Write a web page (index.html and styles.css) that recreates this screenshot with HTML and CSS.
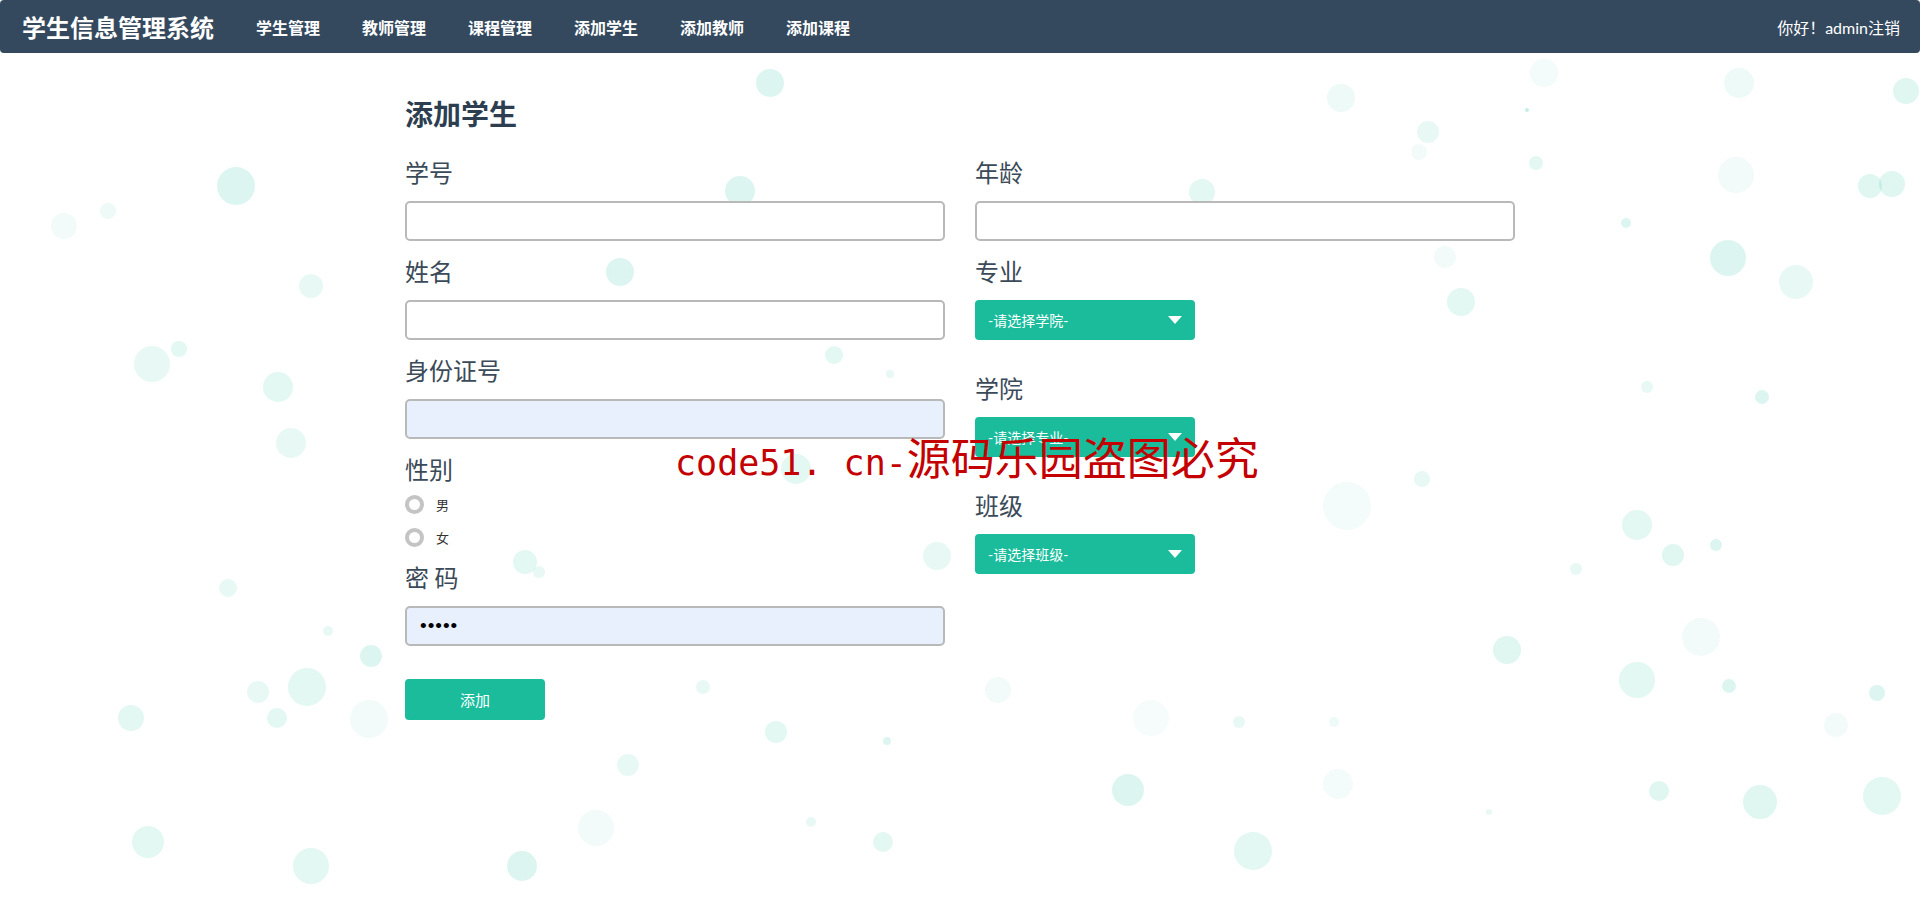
FILE: index.html
```html
<!DOCTYPE html>
<html lang="zh-CN">
<head>
<meta charset="utf-8">
<title>添加学生</title>
<link rel="stylesheet" href="styles.css">
</head>
<body>
<svg class="bubbles" width="1920" height="902" viewBox="0 0 1920 902" xmlns="http://www.w3.org/2000/svg">
  <g fill="#1abc9c">
    <circle cx="770" cy="83" r="14" fill-opacity=".15"/>
    <circle cx="236" cy="186" r="19" fill-opacity=".15"/>
    <circle cx="740" cy="191" r="15" fill-opacity=".15"/>
    <circle cx="1341" cy="98" r="14" fill-opacity=".08"/>
    <circle cx="1428" cy="132" r="11" fill-opacity=".1"/>
    <circle cx="1419" cy="152" r="8" fill-opacity=".06"/>
    <circle cx="1536" cy="163" r="7" fill-opacity=".12"/>
    <circle cx="1736" cy="175" r="18" fill-opacity=".06"/>
    <circle cx="1739" cy="83" r="15" fill-opacity=".08"/>
    <circle cx="1906" cy="91" r="13" fill-opacity=".14"/>
    <circle cx="1870" cy="186" r="12" fill-opacity=".14"/>
    <circle cx="1892" cy="184" r="13" fill-opacity=".14"/>
    <circle cx="1728" cy="258" r="18" fill-opacity=".15"/>
    <circle cx="1796" cy="282" r="17" fill-opacity=".1"/>
    <circle cx="1626" cy="223" r="5" fill-opacity=".15"/>
    <circle cx="1461" cy="302" r="14" fill-opacity=".12"/>
    <circle cx="1445" cy="257" r="11" fill-opacity=".06"/>
    <circle cx="1202" cy="192" r="13" fill-opacity=".12"/>
    <circle cx="1527" cy="110" r="2" fill-opacity=".25"/>
    <circle cx="1544" cy="73" r="14" fill-opacity=".05"/>
    <circle cx="620" cy="272" r="14" fill-opacity=".15"/>
    <circle cx="311" cy="286" r="12" fill-opacity=".1"/>
    <circle cx="152" cy="364" r="18" fill-opacity=".1"/>
    <circle cx="179" cy="349" r="8" fill-opacity=".12"/>
    <circle cx="278" cy="387" r="15" fill-opacity=".12"/>
    <circle cx="291" cy="443" r="15" fill-opacity=".1"/>
    <circle cx="64" cy="226" r="13" fill-opacity=".06"/>
    <circle cx="108" cy="211" r="8" fill-opacity=".08"/>
    <circle cx="834" cy="355" r="9" fill-opacity=".12"/>
    <circle cx="890" cy="374" r="4" fill-opacity=".1"/>
    <circle cx="525" cy="562" r="12" fill-opacity=".12"/>
    <circle cx="539" cy="572" r="6" fill-opacity=".1"/>
    <circle cx="1347" cy="506" r="24" fill-opacity=".05"/>
    <circle cx="1422" cy="479" r="8" fill-opacity=".1"/>
    <circle cx="1637" cy="525" r="15" fill-opacity=".12"/>
    <circle cx="1673" cy="555" r="11" fill-opacity=".14"/>
    <circle cx="1716" cy="545" r="6" fill-opacity=".15"/>
    <circle cx="1576" cy="569" r="6" fill-opacity=".1"/>
    <circle cx="1701" cy="637" r="19" fill-opacity=".06"/>
    <circle cx="1507" cy="650" r="14" fill-opacity=".14"/>
    <circle cx="1637" cy="680" r="18" fill-opacity=".12"/>
    <circle cx="1729" cy="686" r="7" fill-opacity=".15"/>
    <circle cx="1877" cy="693" r="8" fill-opacity=".15"/>
    <circle cx="1836" cy="725" r="12" fill-opacity=".06"/>
    <circle cx="1762" cy="397" r="7" fill-opacity=".15"/>
    <circle cx="1647" cy="387" r="6" fill-opacity=".1"/>
    <circle cx="307" cy="687" r="19" fill-opacity=".12"/>
    <circle cx="258" cy="692" r="11" fill-opacity=".1"/>
    <circle cx="277" cy="718" r="10" fill-opacity=".12"/>
    <circle cx="131" cy="718" r="13" fill-opacity=".12"/>
    <circle cx="369" cy="719" r="19" fill-opacity=".06"/>
    <circle cx="371" cy="656" r="11" fill-opacity=".15"/>
    <circle cx="228" cy="588" r="9" fill-opacity=".1"/>
    <circle cx="328" cy="631" r="5" fill-opacity=".1"/>
    <circle cx="703" cy="687" r="7" fill-opacity=".1"/>
    <circle cx="776" cy="732" r="11" fill-opacity=".12"/>
    <circle cx="887" cy="741" r="4" fill-opacity=".15"/>
    <circle cx="628" cy="765" r="11" fill-opacity=".1"/>
    <circle cx="998" cy="690" r="13" fill-opacity=".06"/>
    <circle cx="937" cy="556" r="14" fill-opacity=".1"/>
    <circle cx="1128" cy="790" r="16" fill-opacity=".15"/>
    <circle cx="1253" cy="851" r="19" fill-opacity=".12"/>
    <circle cx="883" cy="842" r="10" fill-opacity=".12"/>
    <circle cx="811" cy="822" r="5" fill-opacity=".1"/>
    <circle cx="522" cy="866" r="15" fill-opacity=".15"/>
    <circle cx="311" cy="866" r="18" fill-opacity=".12"/>
    <circle cx="148" cy="842" r="16" fill-opacity=".12"/>
    <circle cx="596" cy="828" r="18" fill-opacity=".06"/>
    <circle cx="1659" cy="791" r="10" fill-opacity=".14"/>
    <circle cx="1760" cy="802" r="17" fill-opacity=".14"/>
    <circle cx="1882" cy="796" r="19" fill-opacity=".12"/>
    <circle cx="1489" cy="812" r="3" fill-opacity=".1"/>
    <circle cx="1239" cy="722" r="6" fill-opacity=".1"/>
    <circle cx="1334" cy="722" r="5" fill-opacity=".08"/>
    <circle cx="1151" cy="718" r="18" fill-opacity=".04"/>
    <circle cx="1338" cy="784" r="15" fill-opacity=".05"/>
    <circle cx="796" cy="469" r="15" fill-opacity=".12"/>
  </g>
</svg>

<nav class="navbar">
  <a class="brand" href="#">学生信息管理系统</a>
  <ul class="nav">
    <li><a href="#">学生管理</a></li>
    <li><a href="#">教师管理</a></li>
    <li><a href="#">课程管理</a></li>
    <li><a href="#">添加学生</a></li>
    <li><a href="#">添加教师</a></li>
    <li><a href="#">添加课程</a></li>
  </ul>
  <div class="user">你好！admin<a href="#">注销</a></div>
</nav>

<main class="container">
  <h3 class="title">添加学生</h3>
  <form class="form">
    <div class="col">
      <label class="label">学号</label>
      <input class="input" type="text">
      <label class="label">姓名</label>
      <input class="input" type="text">
      <label class="label">身份证号</label>
      <input class="input autofill" type="text">
      <label class="label tight">性别</label>
      <div class="radios">
        <label class="radio-row"><input class="radio" type="radio" name="sex">男</label>
        <label class="radio-row"><input class="radio" type="radio" name="sex">女</label>
      </div>
      <label class="label">密 码</label>
      <input class="input autofill password" type="password" value="12345">
      <button class="btn" type="button">添加</button>
    </div>
    <div class="col">
      <label class="label">年龄</label>
      <input class="input" type="text">
      <label class="label">专业</label>
      <button class="select" type="button"><span>-请选择学院-</span><svg width="14" height="8" viewBox="0 0 14 8"><path d="M0 0H14L7 8Z" fill="#fff"/></svg></button>
      <label class="label">学院</label>
      <button class="select" type="button"><span>-请选择专业-</span><svg width="14" height="8" viewBox="0 0 14 8"><path d="M0 0H14L7 8Z" fill="#fff"/></svg></button>
      <label class="label">班级</label>
      <button class="select" type="button"><span>-请选择班级-</span><svg width="14" height="8" viewBox="0 0 14 8"><path d="M0 0H14L7 8Z" fill="#fff"/></svg></button>
    </div>
  </form>
</main>

<div class="watermark"><span class="wm-latin">code51. cn-</span><span class="wm-cjk">源码乐园盗图必究</span></div>
</body>
</html>
```

FILE: styles.css
```css
* { box-sizing: border-box; }

body {
  margin: 0;
  min-height: 902px;
  position: relative;
  overflow: hidden;
  background: #fff;
  color: #2c3e50;
  font-family: "Lato", "Noto Sans CJK SC", sans-serif;
}

.bubbles {
  position: absolute;
  left: 0;
  top: 0;
  z-index: 0;
  pointer-events: none;
}

.navbar {
  position: relative;
  z-index: 1;
  height: 53px;
  background: #34495e;
  border-radius: 4px;
  display: flex;
  align-items: center;
  padding: 0 20px 0 22px;
}

.brand {
  color: #fff;
  font-size: 24px;
  font-weight: 700;
  line-height: 1;
  text-decoration: none;
  margin-right: 42px;
  font-family: "Noto Sans CJK SC", sans-serif;
}

.nav {
  display: flex;
  gap: 42px;
  list-style: none;
  margin: 0;
  padding: 0;
}

.nav a {
  color: #fff;
  font-size: 16px;
  font-weight: 700;
  text-decoration: none;
  font-family: "Noto Sans CJK SC", sans-serif;
}

.user {
  margin-left: auto;
  color: #fff;
  font-size: 16px;
}

.user a {
  color: #fff;
  text-decoration: none;
}

.container {
  position: relative;
  z-index: 1;
  width: 1110px;
  margin: 0 auto;
  padding-top: 46px;
}

.title {
  margin: 0 0 33px;
  font-size: 28px;
  line-height: 28px;
  font-weight: 700;
  color: #2c3e50;
  font-family: "Noto Sans CJK SC", sans-serif;
}

.form {
  display: flex;
  gap: 30px;
}

.col {
  width: 540px;
  display: flex;
  flex-direction: column;
  align-items: flex-start;
}

.label {
  display: block;
  font-size: 24px;
  line-height: 24px;
  margin-bottom: 17px;
  color: #3b4a58;
  font-family: "Noto Sans CJK SC", sans-serif;
}

.label.tight {
  margin-bottom: 7px;
}

.input {
  display: block;
  width: 540px;
  height: 40px;
  margin: 0 0 18px;
  padding: 0 13px;
  border: 2px solid #b9b9b9;
  border-radius: 5px;
  background: #fff;
  font-size: 14px;
  color: #000;
  outline: none;
}

.input.autofill {
  background: #e8f0fe;
}

.input.password {
  font-size: 19px;
  letter-spacing: 1px;
}

.radios {
  margin-bottom: 11px;
}

.radio-row {
  display: flex;
  align-items: center;
  gap: 12px;
  height: 33px;
  font-size: 13px;
  color: #333;
  font-family: "Noto Sans CJK SC", sans-serif;
}

.radio {
  appearance: none;
  -webkit-appearance: none;
  width: 19px;
  height: 19px;
  margin: 0;
  border: 4px solid #c4c4c4;
  border-radius: 50%;
  background: #fff;
}

.btn {
  margin-top: 15px;
  width: 140px;
  height: 41px;
  border: none;
  border-radius: 4px;
  background: #1abc9c;
  color: #fff;
  font-size: 15px;
  font-family: "Noto Sans CJK SC", sans-serif;
}

.select {
  width: 220px;
  height: 40px;
  margin-bottom: 36px;
  padding: 0 13px;
  border: none;
  border-radius: 4px;
  background: #1abc9c;
  color: #fff;
  font-size: 14px;
  font-family: "Lato", "Noto Sans CJK SC", sans-serif;
  display: flex;
  align-items: center;
  justify-content: space-between;
}

.watermark {
  position: absolute;
  left: 675px;
  top: 434px;
  z-index: 2;
  color: #c40000;
  white-space: nowrap;
  line-height: 44px;
}

.wm-latin {
  font-family: "DejaVu Sans Mono", monospace;
  font-size: 35px;
}

.wm-cjk {
  font-family: "Noto Sans CJK SC", sans-serif;
  font-size: 44px;
}
```
